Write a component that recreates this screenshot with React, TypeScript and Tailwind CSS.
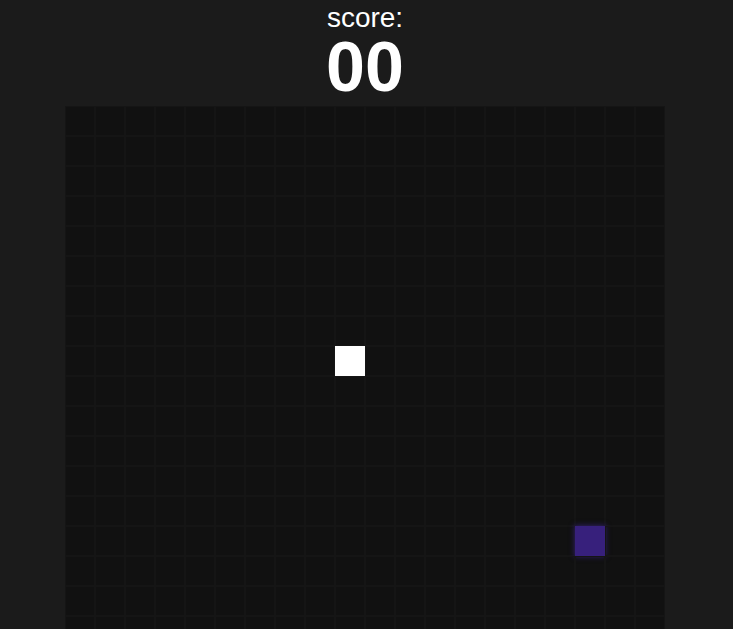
const COLS = 20;
const ROWS = 20;

const snake = [{ x: 9, y: 8 }];
const food = { x: 17, y: 14 };

export default function App() {
  const cells = [];
  for (let y = 0; y < ROWS; y++) {
    for (let x = 0; x < COLS; x++) {
      const isSnake = snake.some((s) => s.x === x && s.y === y);
      const isFood = food.x === x && food.y === y;
      cells.push(
        <div
          key={`${x}-${y}`}
          className={
            isSnake
              ? "bg-white"
              : isFood
              ? "bg-[#37207c] shadow-[0_0_5px_1px_rgba(60,35,150,0.55)]"
              : "border border-[#151515]"
          }
        />
      );
    }
  }

  return (
    <div className="bg-[#1b1b1b] text-white flex flex-col items-center pr-[3px] font-['Liberation_Sans',Arial,sans-serif] overflow-hidden h-[629px]">
      <div className="flex flex-col items-center pt-[2px]">
        <p className="text-[28px] leading-[32px]">score:</p>
        <p className="text-[70px] leading-[66px] font-bold">00</p>
      </div>
      <div className="grid grid-cols-[repeat(20,30px)] grid-rows-[repeat(20,30px)] bg-[#111111] w-[600px] h-[600px] shrink-0 mt-[6px]">
        {cells}
      </div>
    </div>
  );
}
